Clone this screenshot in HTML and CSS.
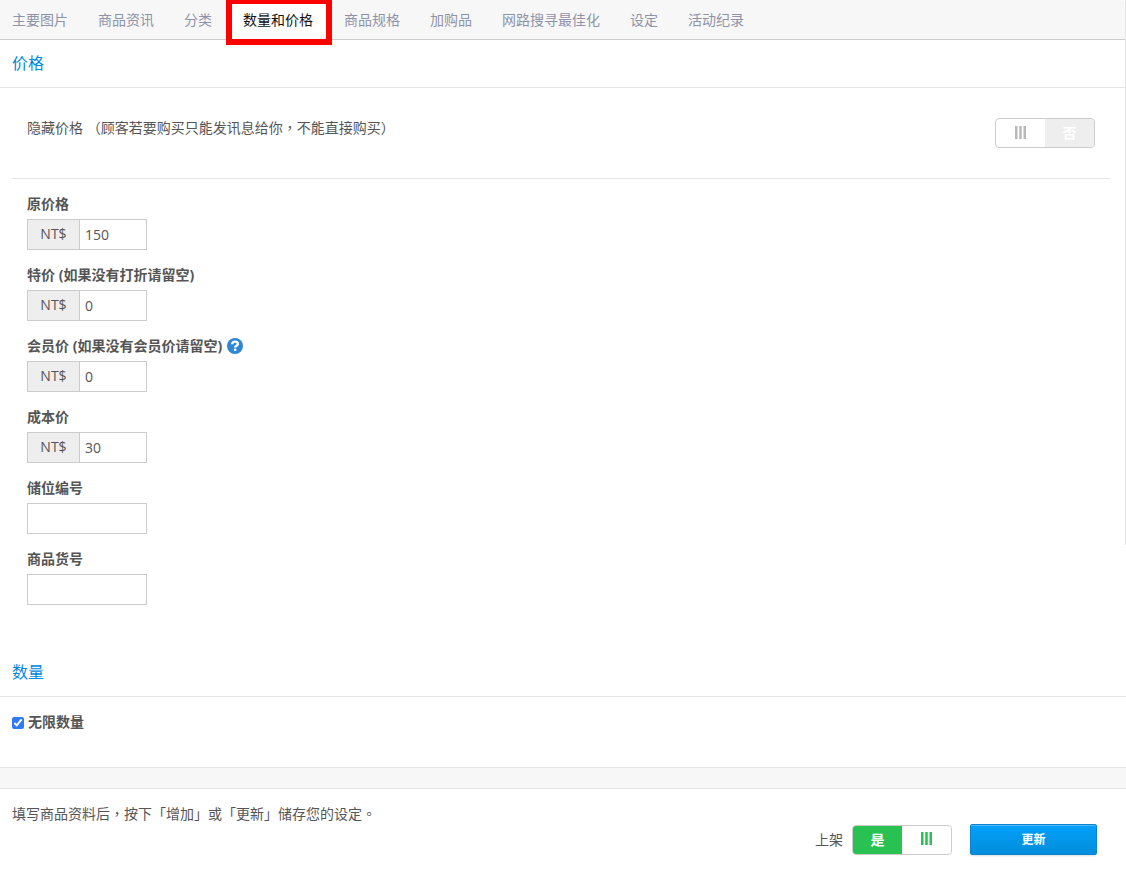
FILE: index.html
```html
<!DOCTYPE html>
<html lang="zh-CN">
<head>
<meta charset="utf-8">
<meta name="viewport" content="width=device-width, initial-scale=1">
<title>数量和价格</title>
<link rel="stylesheet" href="styles.css">
</head>
<body>
<form class="page">
  <section class="panel">
    <nav class="tabs">
      <a class="tab" href="#images">主要图片</a>
      <a class="tab" href="#info">商品资讯</a>
      <a class="tab" href="#category">分类</a>
      <a class="tab tab-active" href="#price" aria-current="page">数量和价格</a>
      <a class="tab" href="#specs">商品规格</a>
      <a class="tab" href="#addons">加购品</a>
      <a class="tab" href="#seo">网路搜寻最佳化</a>
      <a class="tab" href="#settings">设定</a>
      <a class="tab" href="#history">活动纪录</a>
    </nav>
    <h2 class="heading">价格</h2>
    <div class="hide-row">
      <label class="hide-label" for="hide-price" lang="zh-TW">隐藏价格 （顾客若要购买只能发讯息给你，不能直接购买）</label>
      <label class="switch">
        <input class="switch-input" type="checkbox" id="hide-price">
        <span class="switch-half"><svg class="grip grip-off" viewBox="0 0 11 13" aria-hidden="true"><path d="M0 0h2.500v13H0zM4.250 0h2.500v13h-2.500zM8.500 0H11v13H8.500z"/></svg></span>
        <span class="switch-half switch-no">否</span>
      </label>
    </div>
    <div class="fields">
      <div class="field">
        <label class="field-label" for="price">原价格</label>
        <div class="money"><span class="unit">NT$</span><input class="box" id="price" type="text" value="150"></div>
      </div>
      <div class="field">
        <label class="field-label" for="sale">特价 (如果没有打折请留空)</label>
        <div class="money"><span class="unit">NT$</span><input class="box" id="sale" type="text" value="0"></div>
      </div>
      <div class="field">
        <div class="label-row">
          <label class="field-label" for="member">会员价 (如果没有会员价请留空)</label>
          <svg class="help" viewBox="0 0 16 16" role="img" aria-label="说明"><circle cx="8" cy="8" r="8" fill="#2f86d2"/><path d="M5.2 6.2C5.3 4.300 6.500 3.700 8 3.700s2.900.9 2.900 2.300C10.900 7.700 8.100 7.700 8.100 9.600" fill="none" stroke="#fff" stroke-width="2.300"/><path d="M6.900 10.600h2.400v2.300H6.900z" fill="#fff"/></svg>
        </div>
        <div class="money"><span class="unit">NT$</span><input class="box" id="member" type="text" value="0"></div>
      </div>
      <div class="field">
        <label class="field-label" for="cost">成本价</label>
        <div class="money"><span class="unit">NT$</span><input class="box" id="cost" type="text" value="30"></div>
      </div>
      <div class="field">
        <label class="field-label" for="location">储位编号</label>
        <div class="money"><input class="box" id="location" type="text"></div>
      </div>
      <div class="field">
        <label class="field-label" for="sku">商品货号</label>
        <div class="money"><input class="box" id="sku" type="text"></div>
      </div>
    </div>
  </section>
  <section class="quantity">
    <h2 class="heading">数量</h2>
    <div class="unlimited">
      <input class="check" type="checkbox" id="unlimited" checked>
      <label class="field-label" for="unlimited">无限数量</label>
    </div>
  </section>
  <div class="divider"></div>
  <footer class="footer">
    <p class="note" lang="zh-TW">填写商品资料后，按下「增加」或「更新」储存您的设定。</p>
    <div class="actions">
      <label for="publish">上架</label>
      <label class="switch">
        <input class="switch-input" type="checkbox" id="publish" checked>
        <span class="switch-half switch-yes">是</span>
        <span class="switch-half"><svg class="grip grip-on" viewBox="0 0 11 13" aria-hidden="true"><path d="M0 0h2.500v13H0zM4.250 0h2.500v13h-2.500zM8.500 0H11v13H8.500z"/></svg></span>
      </label>
      <button class="update" type="button">更新</button>
    </div>
  </footer>
</form>
</body>
</html>
```

FILE: styles.css
```css
* {
  box-sizing: border-box;
}

body {
  margin: 0;
  background: #fff;
  color: #555;
  font: 14px/20px "Open Sans", "Noto Sans CJK SC", sans-serif;
}

.panel {
  padding: 0 1px 44px 0;
  background: linear-gradient(#e5e5e5, #e5e5e5) right top / 1px 545px no-repeat;
}

.tabs {
  display: flex;
  gap: 30px;
  height: 40px;
  padding-left: 12px;
  border-bottom: 1px solid #ccc;
  border-top-right-radius: 4px;
  background: #f7f7f7;
}

.tab {
  line-height: 40px;
  color: #8f93a8;
  text-decoration: none;
  white-space: nowrap;
}

.tab-active {
  position: relative;
  z-index: 1;
  padding: 0 1px;
  color: #111;
}

.tab-active::before {
  content: "";
  position: absolute;
  z-index: -1;
  inset: -2px -18px -6px -16px;
  border: 6px solid #f00;
  background: #fff;
}

.heading {
  margin: 0;
  padding: 12px;
  border-bottom: 1px solid #e5e5e5;
  color: #0088e0;
  font-size: 16px;
  font-weight: 400;
  line-height: 23px;
}

.hide-row {
  display: flex;
  justify-content: space-between;
  align-items: flex-start;
  margin: 0 15px 0 12px;
  padding: 30px 15px;
  border-bottom: 1px solid #e5e5e5;
}

.hide-label,
.note {
  font-family: "Open Sans", "Noto Sans CJK TC", sans-serif;
}

.switch {
  position: relative;
  display: flex;
  flex: none;
  width: 100px;
  height: 30px;
  border: 1px solid #ccc;
  border-radius: 4px;
  overflow: hidden;
  background: #fff;
  cursor: pointer;
}

.switch-input {
  position: absolute;
  inset: 0;
  margin: 0;
  opacity: 0;
}

.switch-half {
  display: flex;
  flex: 1;
  align-items: center;
  justify-content: center;
  font-weight: 700;
}

.switch-no {
  background: #eee;
  color: #fff;
}

.switch-yes {
  background: #29c152;
  color: #fff;
}

.grip {
  width: 11px;
  height: 13px;
  margin-bottom: 2px;
}

.grip-off {
  fill: #b8b8b8;
}

.grip-on {
  fill: #29c152;
}

.fields {
  display: grid;
  justify-items: start;
  gap: 15px;
  padding: 15px 27px 0;
}

.field-label {
  display: block;
  font-weight: 700;
}

.field {
  display: grid;
  gap: 5px;
}

.label-row {
  display: flex;
  align-items: center;
  gap: 5px;
}

.help {
  width: 16px;
  height: 16px;
}

.money {
  display: flex;
  width: 120px;
  height: 31px;
}

.unit {
  flex: none;
  width: 52px;
  border: 1px solid #ccc;
  border-right: 0;
  background: #eee;
  line-height: 28px;
  text-align: center;
}

.box {
  flex: 1;
  min-width: 0;
  padding: 0 5px;
  border: 1px solid #ccc;
  border-radius: 0;
  background: #fff;
  color: #555;
  font: inherit;
}

.unlimited {
  display: flex;
  align-items: center;
  gap: 4px;
  padding: 15px 12px 35px;
}

.check {
  width: 12px;
  height: 12px;
  margin: 2px 0 0;
  accent-color: #2f7bf6;
}

.divider {
  height: 22px;
  border: solid #e5e5e5;
  border-width: 1px 0;
  background: #f7f7f7;
}

.footer {
  padding: 15px 29px 17px 12px;
}

.note {
  margin: 0;
}

.actions {
  display: flex;
  align-items: center;
  justify-content: flex-end;
  gap: 9px;
}

.update {
  width: 127px;
  height: 31px;
  margin-left: 9px;
  border: 1px solid #0a84cc;
  border-radius: 2px;
  background: linear-gradient(#04a0fb, #018edb);
  box-shadow: inset 0 1px 0 #4cb8f8, 0 1px 2px #ddd;
  color: #fff;
  font: 700 12px/20px "Open Sans", "Noto Sans CJK SC", sans-serif;
}
```
